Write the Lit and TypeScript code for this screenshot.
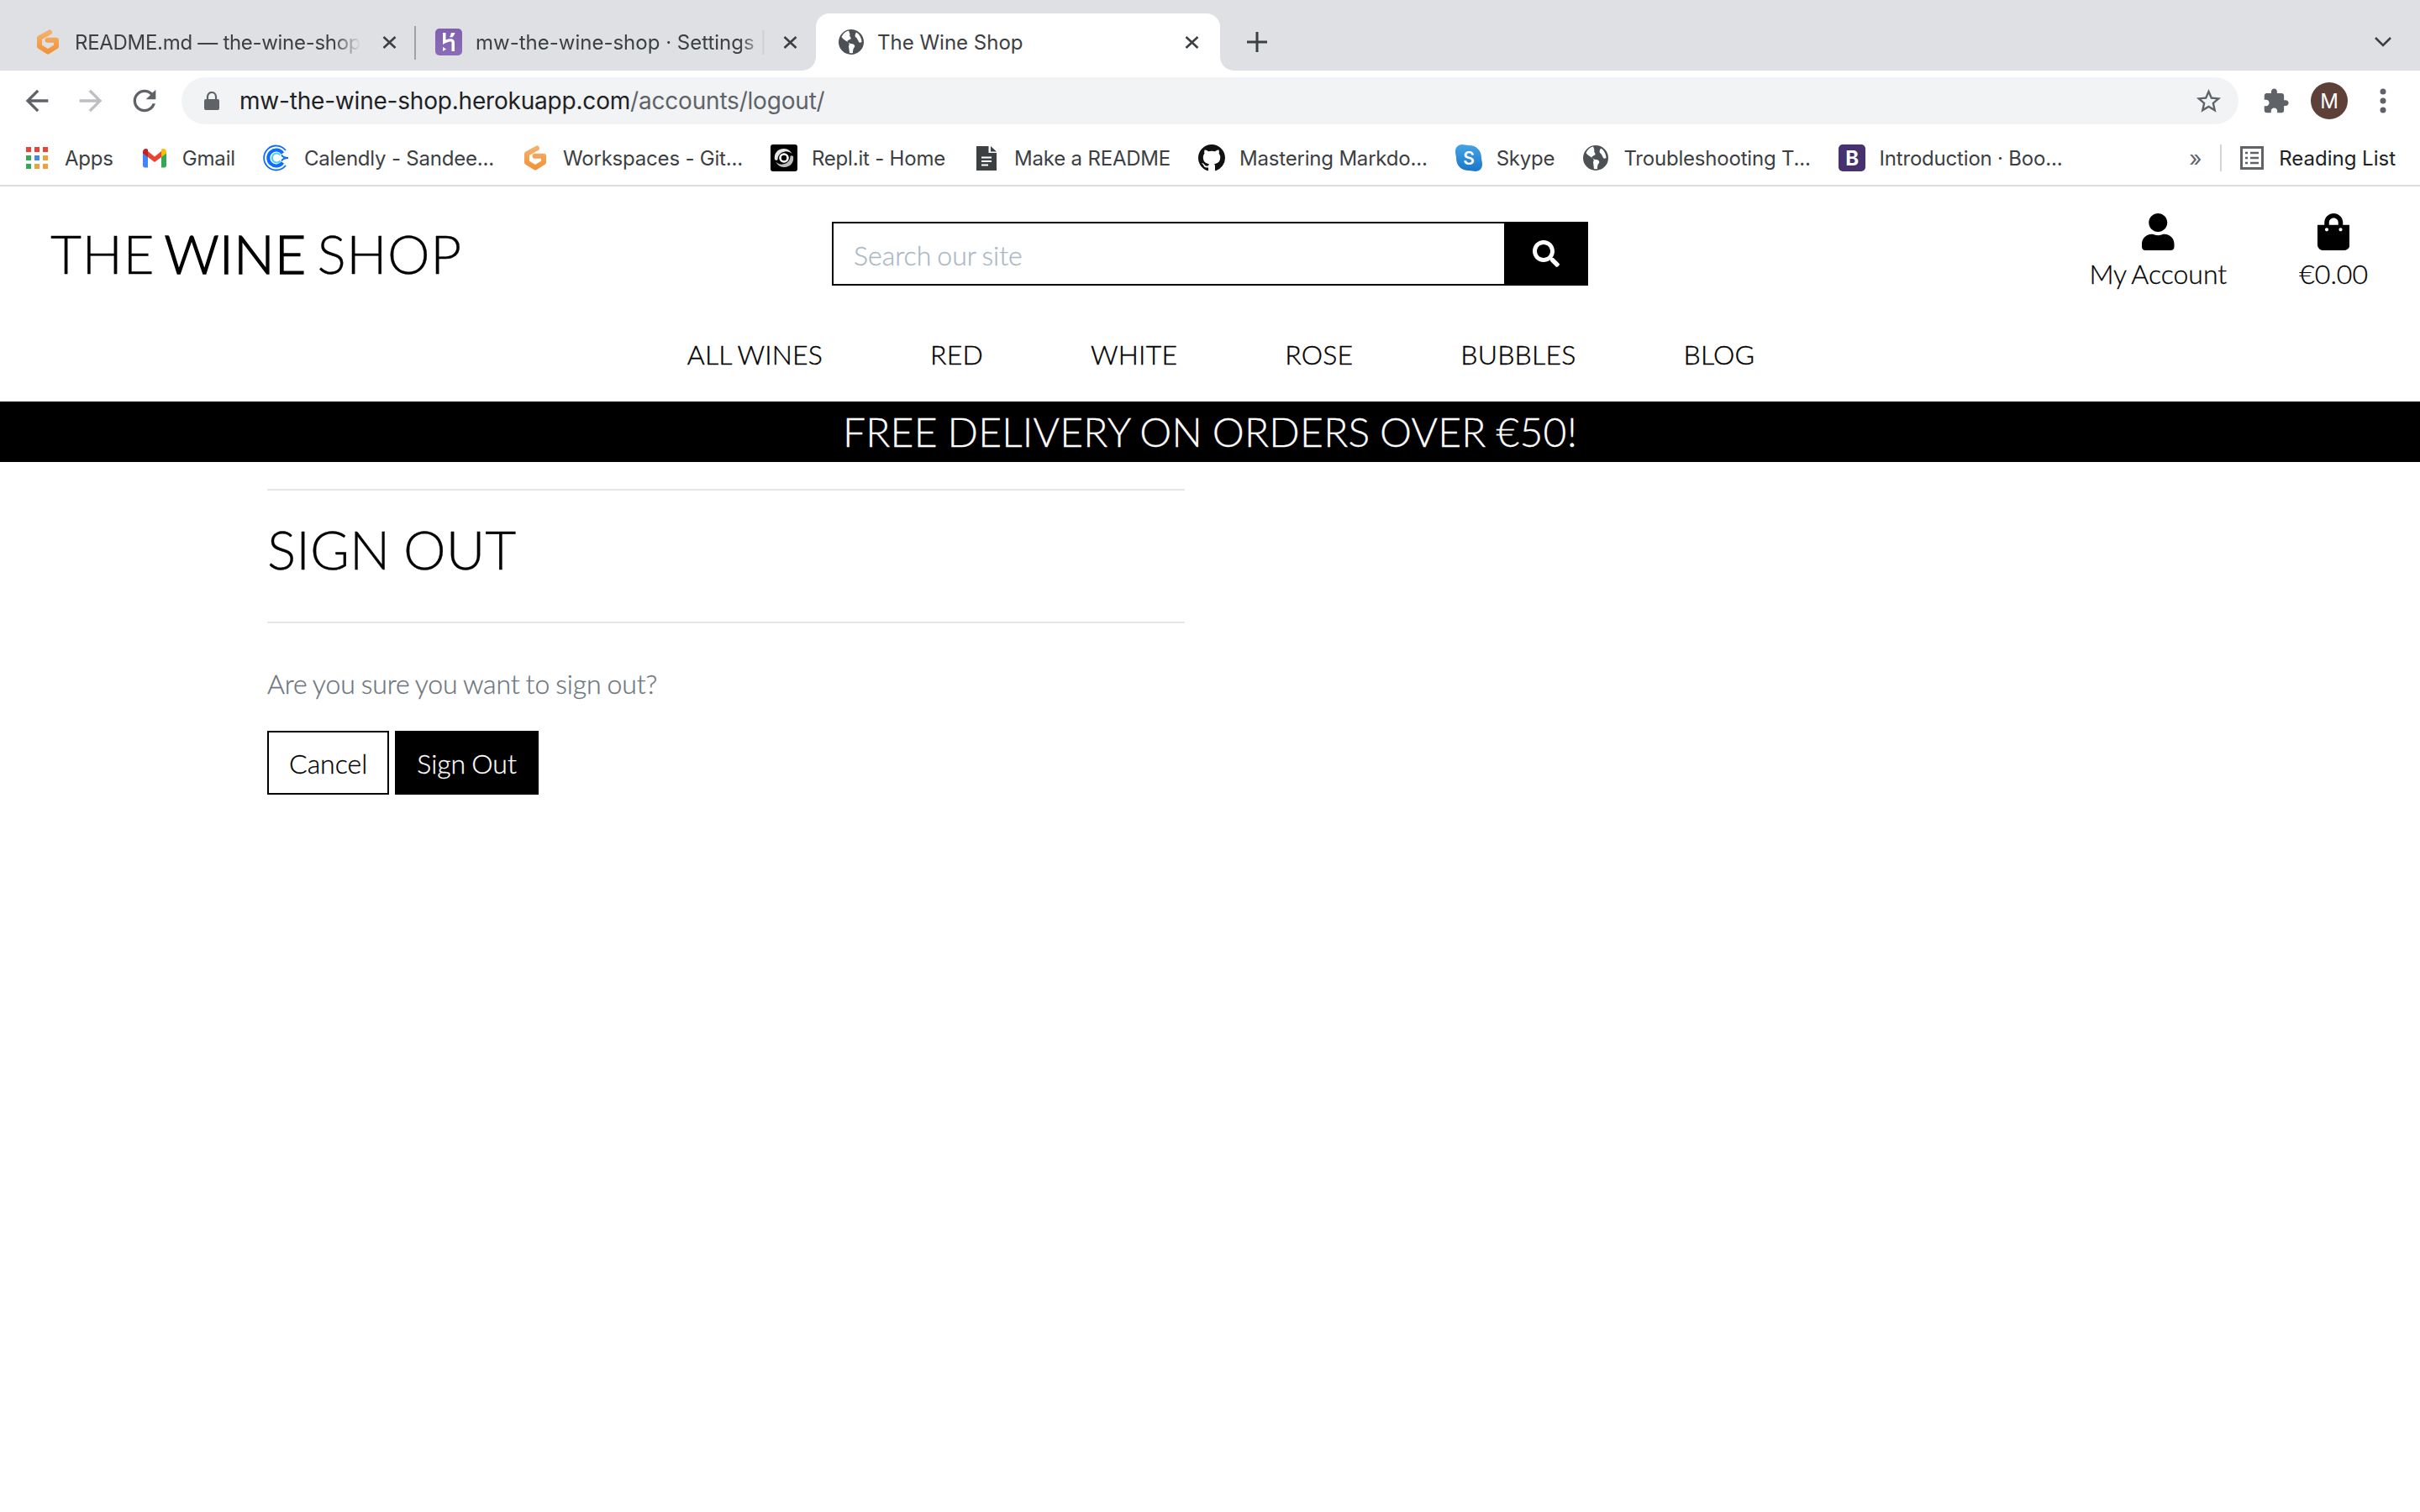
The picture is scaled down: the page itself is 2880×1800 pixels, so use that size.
import { LitElement, css, html, svg } from 'lit';
import { customElement } from 'lit/decorators.js';

const gitpod = svg`<svg class="fav" viewBox="0 0 32 32"><defs><linearGradient id="gp" x1="0" y1="0" x2="0" y2="1"><stop offset="0" stop-color="#f4b06a"/><stop offset="1" stop-color="#f2933a"/></linearGradient></defs><path d="M18 4.500L6 11.200v10L16 27.500l10-6.300v-7.400H15.500" fill="none" stroke="url(#gp)" stroke-width="6" stroke-linecap="round" stroke-linejoin="round"/></svg>`;
const heroku = svg`<svg class="fav" viewBox="0 0 32 32"><defs><linearGradient id="hk" x1="0" y1="0" x2="0" y2="1"><stop offset="0" stop-color="#7f61ad"/><stop offset="1" stop-color="#8a6cb8"/></linearGradient></defs><rect width="32" height="32" rx="5" fill="url(#hk)"/><path d="M9 5h3.500v8.500c3-1 5.500-1.500 7.500-1 2 .5 3 2 3 4.500v10h-3.500V17c0-1-.6-1.500-1.600-1.400-2 .2-5.400 1.500-8.900 3.400z" fill="#fff"/><path d="M19 5h4.500c-.5 2-1.500 3.800-3 5.300H17c1-1.500 1.600-3.300 2-5.300z" fill="#fff"/><path d="M9 22l4 2.500L9 27z" fill="#fff"/></svg>`;
const globe = svg`<svg class="fav" viewBox="0 0 32 32"><circle cx="16" cy="16" r="15" fill="#4d5156"/><path d="M13 2.500c-4 1-7 4-8.500 7.500 2 3 5 4 7.500 6 2 1 2 3 1 5l1 8c1 .2 3 .5 4 0 0-3 0-5 2-7 1-2-1-4-4-4-2 0-3-2-5-2 0-2 2-2 3-3 2 0 2-3 0-4 1-2 0-4-1-6.500zM22 4.500c-1 2-2 3.500-1 5.500 2 1 3 4 4 6 1 1 2 1 3.500 0 0-4-2.500-9.500-6.500-11.500z" fill="#fff"/></svg>`;
const close = svg`<svg class="x" viewBox="0 0 17 15"><path d="M1.500 1l14 13M15.500 1l-14 13" stroke="#3c4043" stroke-width="2.600" fill="none"/></svg>`;
const apps = svg`<svg class="fav apps" viewBox="0 0 26 26"><g fill="#ea4335"><rect width="6" height="6"/><rect x="10" width="6" height="6"/><rect x="20" width="6" height="6"/></g><rect y="10" width="6" height="6" fill="#34a853"/><rect x="10" y="10" width="6" height="6" fill="#4285f4"/><rect x="20" y="10" width="6" height="6" fill="#e8a33d"/><rect y="20" width="6" height="6" fill="#34a853"/><rect x="10" y="20" width="6" height="6" fill="#e8a33d"/><rect x="20" y="20" width="6" height="6" fill="#e8a33d"/></svg>`;
const gmail = svg`<svg class="fav" viewBox="0 0 32 32"><path d="M2 9v16c0 1.500 1 2.500 2.500 2.500H8V14z" fill="#4285f4"/><path d="M30 9v16c0 1.500-1 2.500-2.500 2.500H24V14z" fill="#34a853"/><path d="M8 8l8 6.500L24 8v7l-8 6-8-6z" fill="#ea4335"/><path d="M2 9c0-3.500 3.500-5 6-3v9l-6-4.500z" fill="#c5221f"/><path d="M30 9c0-3.500-3.500-5-6-3v9l6-4.500z" fill="#fbbc04"/></svg>`;
const calendly = svg`<svg class="fav" viewBox="0 0 32 32"><path d="M27 7A14.500 14.500 0 1 0 27 25" fill="none" stroke="#0b6cff" stroke-width="1.800"/><path d="M23.500 10.500A9.500 9.500 0 1 0 23.500 21.500" fill="none" stroke="#0b6cff" stroke-width="4"/><path d="M20.500 12.500A5.500 5.500 0 1 0 20.500 19.500" fill="none" stroke="#4cd0f7" stroke-width="2.200"/><path d="M22 12.500c1.500 2.500 4 3.500 8 3.500-4 0-6.500 1-8 3.500" fill="none" stroke="#0b6cff" stroke-width="1.800"/></svg>`;
const replit = svg`<svg class="fav" viewBox="0 0 32 32"><rect width="32" height="32" rx="3" fill="#000"/><path d="M5 18C3.500 10 9.500 4.500 16.500 5c4 .3 7.500 2.500 9 6-2.500-2-5.500-3-8.500-2.500-5 .7-8.500 4.500-8.500 9.500 0 1-1.500 1.200-3.500 0z" fill="#e6e6e6"/><path d="M27 14c1.500 8-4.500 13.500-11.500 13-4-.3-7.500-2.500-9-6 2.500 2 5.500 3 8.500 2.500 5-.7 8.500-4.500 8.500-9.500 0-1 1.500-1.200 3.500 0z" fill="#bdbdbd"/><circle cx="16" cy="16" r="4.500" fill="none" stroke="#fff" stroke-width="2.600"/></svg>`;
const doc = svg`<svg class="fav" viewBox="0 0 32 32"><path d="M4 2h14.500v8H28v21H4z" fill="#3c4043"/><path d="M21 2l7 6.500h-7z" fill="#3c4043"/><path d="M10 15.500h12M10 20h12M10 24.500h8" stroke="#fff" stroke-width="2"/></svg>`;
const github = svg`<svg class="fav" viewBox="0 0 16 16"><path d="M8 0C3.580 0 0 3.580 0 8c0 3.540 2.290 6.530 5.470 7.590.4.070.55-.17.55-.38 0-.19-.01-.82-.01-1.490-2.010.37-2.530-.49-2.690-.94-.09-.23-.48-.94-.82-1.130-.28-.15-.68-.52-.01-.53.63-.01 1.080.58 1.230.82.72 1.210 1.870.87 2.330.66.07-.52.28-.87.51-1.070-1.780-.2-3.640-.89-3.640-3.950 0-.87.31-1.590.82-2.150-.08-.2-.36-1.020.08-2.120 0 0 .67-.21 2.200.82.64-.18 1.320-.27 2-.27.68 0 1.360.09 2 .27 1.530-1.040 2.200-.82 2.200-.82.44 1.100.16 1.920.08 2.120.51.56.82 1.270.82 2.150 0 3.070-1.870 3.750-3.650 3.950.29.25.54.73.54 1.480 0 1.070-.01 1.930-.01 2.200 0 .21.15.46.55.38A8.013 8.013 0 0016 8c0-4.420-3.580-8-8-8z" fill="#111"/></svg>`;
const skype = svg`<svg class="fav" viewBox="0 0 32 32"><defs><linearGradient id="sk" x1="0" y1="0" x2="0" y2="1"><stop offset="0" stop-color="#45a3e5"/><stop offset="1" stop-color="#1a76c9"/></linearGradient></defs><path d="M8 0c3 0 5 1 8 1 9 0 15 6 15 15 0 2 1 4 1 8 0 5-4 8-8 8-3 0-5-1-8-1C7 31 1 25 1 16c0-2-1-4-1-8 0-5 4-8 8-8z" fill="url(#sk)"/><text x="16" y="24" text-anchor="middle" font-family="Inter, sans-serif" font-size="21" font-weight="600" fill="#fff">S</text></svg>`;
const bootstrap = svg`<svg class="fav" viewBox="0 0 32 32"><rect width="32" height="32" rx="5" fill="#46326f"/><text x="16" y="25" text-anchor="middle" font-family="Inter, sans-serif" font-size="24" font-weight="700" fill="#fff">B</text></svg>`;

const tabs = [
  { icon: gitpod, label: 'README.md — the-wine-shop', kind: 'first' },
  { icon: heroku, label: 'mw-the-wine-shop · Settings |', kind: 'second' },
  { icon: globe, label: 'The Wine Shop', kind: 'active' },
];

const bookmarks = [
  { icon: apps, label: 'Apps' },
  { icon: gmail, label: 'Gmail' },
  { icon: calendly, label: 'Calendly - Sandee...' },
  { icon: gitpod, label: 'Workspaces - Git...' },
  { icon: replit, label: 'Repl.it - Home' },
  { icon: doc, label: 'Make a README' },
  { icon: github, label: 'Mastering Markdo...' },
  { icon: skype, label: 'Skype' },
  { icon: globe, label: 'Troubleshooting T...' },
  { icon: bootstrap, label: 'Introduction · Boo...' },
];

const navLinks = ['ALL WINES', 'RED', 'WHITE', 'ROSE', 'BUBBLES', 'BLOG'];

@customElement('app-root')
export class AppRoot extends LitElement {
  static styles = css`
    :host {
      display: block;
      min-height: 1800px;
      background: #fff;
      font-family: Lato, sans-serif;
      font-weight: 300;
      color: #000;
    }

    .site {
      word-spacing: -0.1em;
      -webkit-text-stroke: 0.3px;
    }

    .chrome {
      font-family: Inter, 'Liberation Sans', sans-serif;
      font-weight: 400;
      color: #3c4043;
    }

    .strip {
      display: flex;
      align-items: stretch;
      height: 68px;
      padding: 16px 34px 0 17px;
      background: #dfe0e4;
    }
    .tab {
      position: relative;
      display: flex;
      align-items: center;
      width: 477px;
      padding: 0 22px 0 24px;
      box-sizing: border-box;
      font-size: 24px;
    }
    .tab.first::after {
      content: '';
      position: absolute;
      right: -1px;
      top: 15px;
      height: 40px;
      width: 2px;
      background: #9ea1a5;
    }
    .tab.first .label {
      letter-spacing: -0.3px;
    }
    .tab.active {
      width: 481px;
      padding: 0 25px 0 26px;
      background: #fff;
      border-radius: 16px 16px 0 0;
    }
    .tab.active::before,
    .tab.active::after {
      content: '';
      position: absolute;
      bottom: 0;
      width: 16px;
      height: 16px;
    }
    .tab.active::before {
      left: -16px;
      background: radial-gradient(circle at 0 0, #dfe0e4 15.5px, #fff 16px);
    }
    .tab.active::after {
      right: -16px;
      background: radial-gradient(circle at 100% 0, #dfe0e4 15.5px, #fff 16px);
    }
    .tab .label {
      flex: none;
      margin: 0 auto 0 16px;
      white-space: nowrap;
      -webkit-mask-image: linear-gradient(90deg, #000 calc(100% - 32px), transparent);
      mask-image: linear-gradient(90deg, #000 calc(100% - 32px), transparent);
    }
    .tab.active .label {
      margin-left: 15px;
      -webkit-mask-image: none;
      mask-image: none;
    }
    .fav {
      flex: none;
      width: 32px;
      height: 32px;
    }
    .x {
      flex: none;
      width: 17px;
      height: 15px;
    }
    .plus {
      flex: none;
      align-self: center;
      width: 24px;
      height: 24px;
      margin-left: 32px;
    }
    .chev {
      flex: none;
      align-self: center;
      width: 20px;
      height: 12px;
      margin-left: auto;
    }

    .toolbar {
      display: flex;
      align-items: center;
      height: 72px;
      padding: 0 12px;
      background: #fff;
    }
    .tool {
      flex: none;
      width: 64px;
      display: flex;
      align-items: center;
      justify-content: center;
    }
    .tool svg {
      width: 40px;
      height: 40px;
    }
    .tool svg.puzzle {
      width: 33px;
      height: 33px;
    }
    .omni {
      flex: none;
      display: flex;
      align-items: center;
      width: 2448px;
      height: 56px;
      margin: 0 12px;
      padding: 0 18px 0 27px;
      box-sizing: border-box;
      background: #f1f3f4;
      border-radius: 28px;
      font-size: 28px;
      letter-spacing: -0.2px;
      color: #5f6368;
    }
    .omni .lock {
      width: 18px;
      height: 22px;
      margin-right: 24px;
    }
    .omni .url {
      flex: 1;
      white-space: nowrap;
    }
    .omni .url b {
      font-weight: 400;
      color: #202124;
    }
    .omni .star {
      width: 35px;
      height: 35px;
    }
    .avatar {
      width: 44px;
      height: 44px;
      border-radius: 50%;
      background: #5d4037;
      color: #fff;
      font-size: 24px;
      display: flex;
      align-items: center;
      justify-content: center;
    }

    .bookmarks {
      display: flex;
      align-items: center;
      height: 64px;
      padding: 0 29px;
      border-bottom: 2px solid #dadce0;
      background: #fff;
      font-size: 24px;
      letter-spacing: -0.2px;
    }
    .mark {
      display: flex;
      align-items: center;
      gap: 17px;
      margin-right: 33px;
      white-space: nowrap;
    }
    .fav.apps {
      width: 26px;
      height: 26px;
      margin: 0 3px 0 2px;
    }
    .more {
      margin-left: auto;
      margin-right: 22px;
      font-size: 26px;
      color: #5f6368;
    }
    .rule {
      width: 2px;
      height: 32px;
      background: #d3d5d8;
      margin-right: 22px;
    }
    .reading {
      display: flex;
      align-items: center;
      gap: 18px;
      letter-spacing: 0;
      color: #202124;
    }
    .reading svg {
      width: 28px;
      height: 28px;
    }

    .head {
      display: grid;
      grid-template-columns: repeat(3, 960px);
      height: 120px;
    }
    .logo {
      padding: 42px 0 0 60px;
      font-size: 64px;
      line-height: 76px;
      letter-spacing: 0.5px;
      word-spacing: -5px;
      white-space: nowrap;
    }
    .logo strong {
      font-weight: 300;
      -webkit-text-stroke: 1.400px;
    }
    .search {
      display: flex;
      margin: 42px 30px 0;
      height: 76px;
    }
    .search input {
      flex: 1;
      min-width: 0;
      padding: 2px 24px 0;
      border: 2px solid #000;
      border-right: 0;
      border-radius: 0;
      outline: 0;
      font: 300 32px Lato, sans-serif;
      word-spacing: -0.05em;
    }
    .search input::placeholder {
      color: #aab7c4;
      opacity: 1;
    }
    .search button {
      flex: none;
      width: 100px;
      border: 0;
      padding: 0;
      background: #000;
      display: flex;
      align-items: center;
      justify-content: center;
    }
    .search svg {
      width: 32px;
      height: 32px;
      fill: #fff;
    }
    .account {
      display: flex;
      justify-content: flex-end;
      gap: 86px;
      padding: 32px 62px 0 0;
    }
    .account div {
      display: flex;
      flex-direction: column;
      align-items: center;
      gap: 6px;
      font-size: 32px;
      line-height: 44px;
    }
    .account svg {
      width: 38.500px;
      height: 44px;
    }

    nav {
      display: flex;
      justify-content: center;
      gap: 128px;
      height: 136px;
      padding: 60px 0 0 26px;
      box-sizing: border-box;
      font-size: 32px;
      line-height: 40px;
      letter-spacing: 0.2px;
      white-space: nowrap;
      -webkit-text-stroke: 0.4px;
    }
    .delivery {
      height: 72px;
      background: #000;
      color: #fff;
      font-size: 48px;
      line-height: 72px;
      letter-spacing: 0.24px;
      text-align: center;
    }

    main {
      width: 1092px;
      margin: 32px 0 0 318px;
    }
    .title {
      border-top: 2px solid #e6e6e6;
      border-bottom: 2px solid #e6e6e6;
      height: 156px;
    }
    h2 {
      margin: 0;
      padding-top: 32px;
      font-size: 64px;
      line-height: 76px;
      font-weight: 300;
    }
    p {
      margin: 48px 0 0;
      font-size: 32px;
      line-height: 48px;
      letter-spacing: -0.1px;
      color: #6c757d;
    }
    .actions {
      display: flex;
      gap: 7px;
      margin-top: 32px;
    }
    .btn {
      display: flex;
      align-items: center;
      height: 76px;
      padding: 0 24px;
      box-sizing: border-box;
      border: 2px solid #000;
      font-size: 32px;
    }
    .btn.dark {
      background: #000;
      color: #fff;
    }
  `;

  render() {
    return html`
      <div class="chrome">
        <div class="strip">
          ${tabs.map(
            (t) => html`<div class="tab ${t.kind}">${t.icon}<span class="label">${t.label}</span>${close}</div>`
          )}
          <svg class="plus" viewBox="0 0 24 24"><path d="M12 0v24M0 12h24" stroke="#3c4043" stroke-width="3" fill="none"/></svg>
          <svg class="chev" viewBox="0 0 20 12"><path d="M1 1l9 9 9-9" stroke="#3c4043" stroke-width="2.600" fill="none"/></svg>
        </div>
        <div class="toolbar">
          <div class="tool"><svg viewBox="0 0 24 24"><path d="M20 11H7.830l5.590-5.590L12 4l-8 8 8 8 1.410-1.410L7.830 13H20v-2z" fill="#5f6368"/></svg></div>
          <div class="tool"><svg viewBox="0 0 24 24"><path d="M4 11h12.170l-5.590-5.590L12 4l8 8-8 8-1.410-1.410L16.170 13H4v-2z" fill="#bcbec1"/></svg></div>
          <div class="tool"><svg viewBox="0 0 24 24"><path d="M17.650 6.350C16.200 4.900 14.210 4 12 4c-4.420 0-7.990 3.580-7.990 8s3.570 8 7.990 8c3.730 0 6.840-2.550 7.730-6h-2.080c-.82 2.330-3.040 4-5.650 4-3.310 0-6-2.690-6-6s2.690-6 6-6c1.660 0 3.140.69 4.220 1.780L13 11h7V4l-2.350 2.350z" fill="#5f6368"/></svg></div>
          <div class="omni">
            <svg class="lock" viewBox="0 0 18 22"><path d="M4 10V6a5 5 0 0 1 10 0v4" stroke="#5f6368" stroke-width="2.200" fill="none"/><rect y="9" width="18" height="13" rx="2" fill="#5f6368"/></svg>
            <span class="url"><b>mw-the-wine-shop.herokuapp.com</b>/accounts/logout/</span>
            <svg class="star" viewBox="0 0 24 24"><path d="M22 9.240l-7.190-.62L12 2 9.190 8.630 2 9.240l5.460 4.730L5.820 21 12 17.270 18.180 21l-1.630-7.030L22 9.240zM12 15.400l-3.760 2.270 1-4.280-3.320-2.880 4.380-.38L12 6.100l1.710 4.040 4.380.38-3.320 2.880 1 4.280L12 15.400z" fill="#5f6368"/></svg>
          </div>
          <div class="tool"><svg class="puzzle" viewBox="0 0 24 24"><path d="M20.500 11H19V7c0-1.100-.9-2-2-2h-4V3.500C13 2.120 11.880 1 10.500 1S8 2.120 8 3.500V5H4c-1.100 0-1.990.9-1.990 2v3.800H3.500c1.490 0 2.700 1.210 2.700 2.700s-1.210 2.700-2.700 2.700H2V20c0 1.100.9 2 2 2h3.800v-1.500c0-1.490 1.210-2.700 2.700-2.700 1.490 0 2.700 1.210 2.700 2.700V22H17c1.100 0 2-.9 2-2v-4h1.500c1.380 0 2.500-1.120 2.500-2.500S21.880 11 20.500 11z" fill="#5f6368"/></svg></div>
          <div class="tool"><div class="avatar">M</div></div>
          <div class="tool"><svg viewBox="0 0 40 40"><circle cx="20" cy="9" r="3.500" fill="#5f6368"/><circle cx="20" cy="20" r="3.500" fill="#5f6368"/><circle cx="20" cy="31" r="3.500" fill="#5f6368"/></svg></div>
        </div>
        <div class="bookmarks">
          ${bookmarks.map((b) => html`<div class="mark">${b.icon}<span>${b.label}</span></div>`)}
          <span class="more">»</span>
          <span class="rule"></span>
          <div class="reading">
            <svg viewBox="0 0 28 28"><rect x="1.500" y="1.500" width="25" height="25" fill="none" stroke="#5f6368" stroke-width="3"/><path d="M6 8h3M12 8h10M6 14h3M12 14h10M6 20h3M12 20h10" stroke="#5f6368" stroke-width="2.500"/></svg>
            <span>Reading List</span>
          </div>
        </div>
      </div>

      <div class="site">
        <header class="head">
          <div class="logo">THE <strong>WINE</strong> SHOP</div>
          <form class="search">
            <input placeholder="Search our site" />
            <button type="button" aria-label="Search">
              <svg viewBox="0 0 512 512"><path d="M505 442.700L405.300 343c-4.500-4.500-10.600-7-17-7H372c27.600-35.300 44-79.700 44-128C416 93.100 322.900 0 208 0S0 93.100 0 208s93.100 208 208 208c48.300 0 92.700-16.400 128-44v16.300c0 6.400 2.500 12.500 7 17l99.700 99.700c9.400 9.400 24.600 9.400 33.900 0l28.300-28.300c9.400-9.400 9.400-24.600.1-34zM208 336c-70.700 0-128-57.200-128-128 0-70.700 57.200-128 128-128 70.700 0 128 57.200 128 128 0 70.700-57.200 128-128 128z"/></svg>
            </button>
          </form>
          <div class="account">
            <div>
              <svg viewBox="0 0 448 512"><path d="M224 256c70.700 0 128-57.300 128-128S294.700 0 224 0 96 57.300 96 128s57.300 128 128 128zm89.600 32h-16.700c-22.200 10.200-46.900 16-72.900 16s-50.600-5.800-72.900-16h-16.700C60.200 288 0 348.200 0 422.400V464c0 26.500 21.500 48 48 48h352c26.500 0 48-21.500 48-48v-41.600c0-74.200-60.200-134.400-134.400-134.400z"/></svg>
              <span>My Account</span>
            </div>
            <div>
              <svg viewBox="0 0 448 512"><path d="M352 160v-32C352 57.420 294.579 0 224 0 153.420 0 96 57.420 96 128v32H0v272c0 44.183 35.817 80 80 80h288c44.183 0 80-35.817 80-80V160h-96zm-192-32c0-35.290 28.710-64 64-64s64 28.710 64 64v32H160v-32zm160 120c-13.255 0-24-10.745-24-24s10.745-24 24-24 24 10.745 24 24-10.745 24-24 24zm-192 0c-13.255 0-24-10.745-24-24s10.745-24 24-24 24 10.745 24 24-10.745 24-24 24z"/></svg>
              <span>€0.00</span>
            </div>
          </div>
        </header>
        <nav>${navLinks.map((n) => html`<span>${n}</span>`)}</nav>
        <div class="delivery">FREE DELIVERY ON ORDERS OVER €50!</div>

        <main>
          <div class="title"><h2>SIGN OUT</h2></div>
          <p>Are you sure you want to sign out?</p>
          <div class="actions">
            <span class="btn">Cancel</span>
            <span class="btn dark">Sign Out</span>
          </div>
        </main>
      </div>
    `;
  }
}
